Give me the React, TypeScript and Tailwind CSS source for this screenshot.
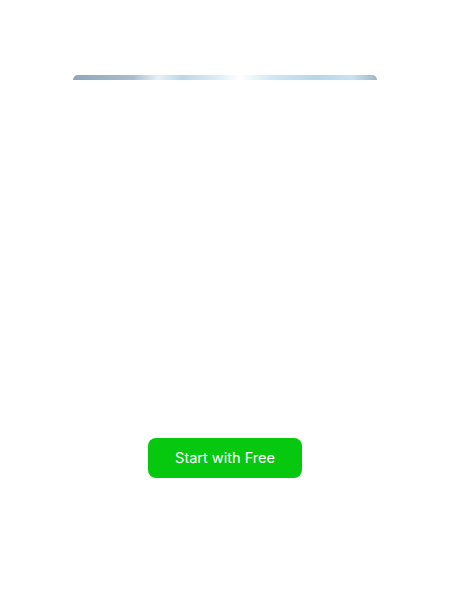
import React from 'react';

const App: React.FC = () => {
  return (
    <div className="w-[450px] h-[600px] bg-white flex flex-col items-center font-[Inter,sans-serif]">
      <div className="mt-[75px] w-[304px] h-[5px] rounded-t-[6px] bg-[linear-gradient(90deg,#8ea6b8_0%,#a9bfcf_20%,#e6f1f8_28%,#bcd6e6_36%,#d7eaf5_46%,#ffffff_55%,#cfe6f3_66%,#b7d6e8_80%,#c9e2f0_92%,#9fb4c2_100%)]" />
      <button className="mt-[358px] w-[154px] h-[40px] rounded-[8px] bg-[#06c90f] text-white text-[14.5px] font-normal leading-none flex items-center justify-center">
        Start with Free
      </button>
    </div>
  );
};

export default App;
